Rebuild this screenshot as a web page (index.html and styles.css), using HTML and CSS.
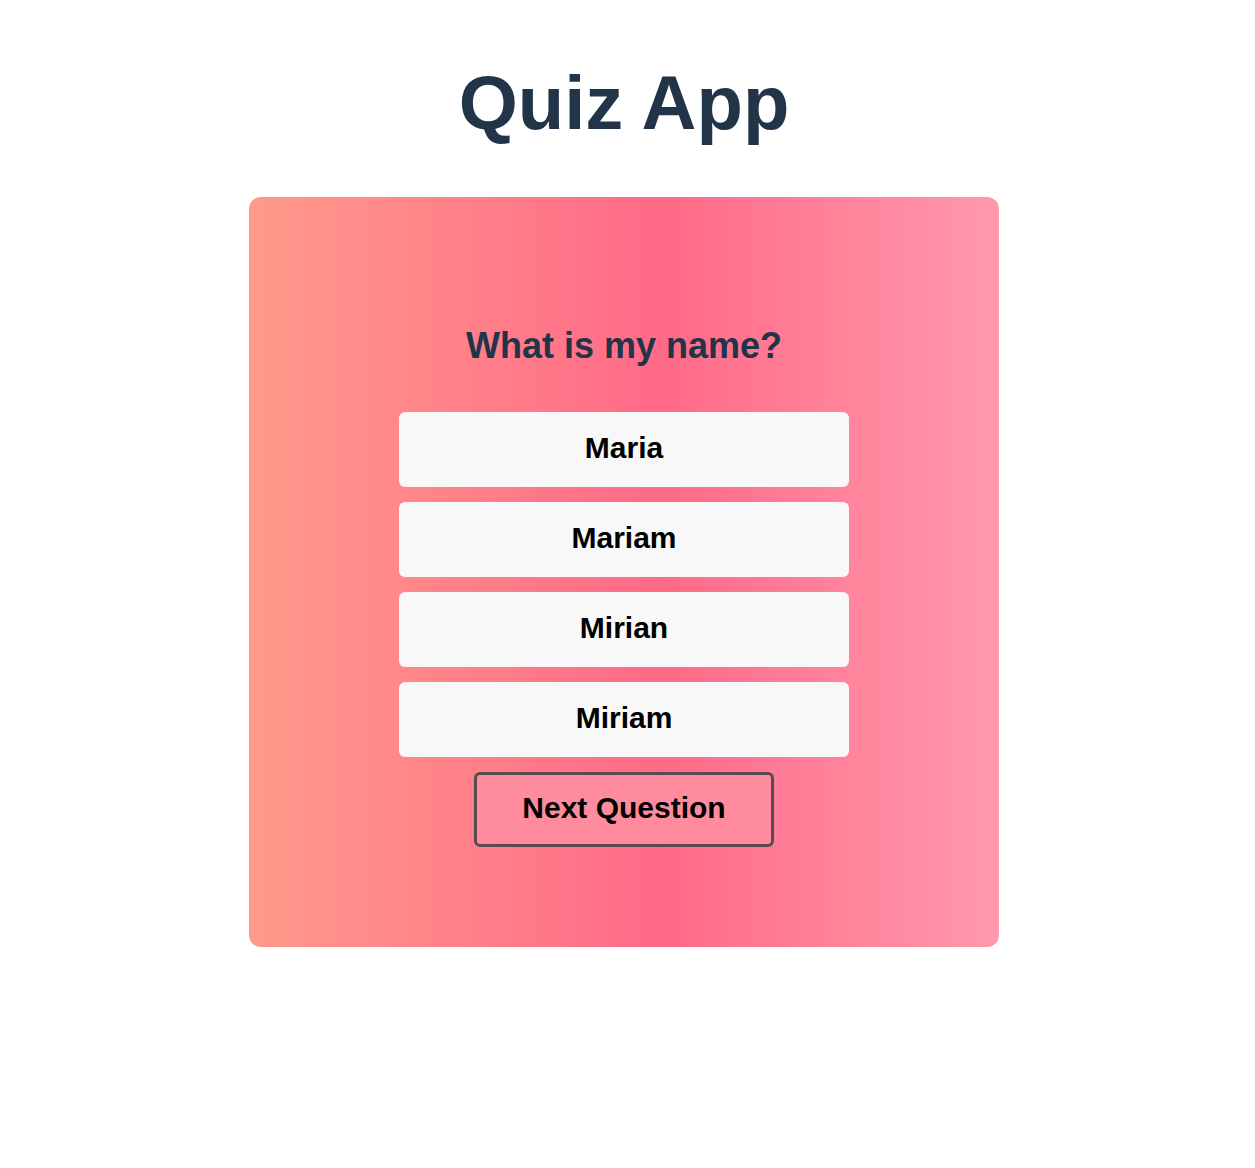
FILE: index.html
```html
<!DOCTYPE html>
<html lang="en">
<head>
<meta charset="utf-8">
<title>Quiz App</title>
<link rel="stylesheet" href="styles.css">
</head>
<body>
  <h1 class="title">Quiz App</h1>
  <div class="card">
    <h2 class="question">What is my name?</h2>
    <div class="answers">
      <button class="answer">Maria</button>
      <button class="answer">Mariam</button>
      <button class="answer">Mirian</button>
      <button class="answer">Miriam</button>
    </div>
    <button class="next">Next Question</button>
  </div>
</body>
</html>
```

FILE: styles.css
```css
html, body {
  margin: 0;
  padding: 0;
  background: #ffffff;
}

body {
  font-family: "Liberation Sans", Arial, sans-serif;
  display: flex;
  flex-direction: column;
  align-items: center;
  padding-right: 7px;
}

.title {
  margin: 59px 0 51px;
  font-size: 76px;
  line-height: 87px;
  font-weight: 700;
  color: #223447;
  text-align: center;
}

.card {
  width: 750px;
  box-sizing: border-box;
  padding: 128px 0 100px;
  border-radius: 12px;
  background: linear-gradient(90deg, #ff9a8b 0%, #ff6a88 55%, #ff99ac 100%);
  display: flex;
  flex-direction: column;
  align-items: center;
}

.question {
  margin: 0 0 46px;
  font-size: 36px;
  line-height: 41px;
  font-weight: 700;
  color: #223447;
  text-align: center;
}

.answers {
  display: flex;
  flex-direction: column;
  gap: 15px;
}

.answer {
  width: 450px;
  height: 75px;
  border: none;
  border-radius: 6px;
  background: #f8f8f8;
  color: #000;
  font-family: "Liberation Sans", Arial, sans-serif;
  font-size: 30px;
  font-weight: 700;
  padding: 0 0 3px;
  cursor: pointer;
}

.next {
  margin-top: 15px;
  width: 300px;
  height: 75px;
  box-sizing: border-box;
  border: 3px solid #5a4b50;
  border-radius: 6px;
  background: #ff8c9e;
  color: #000;
  font-family: "Liberation Sans", Arial, sans-serif;
  font-size: 30px;
  font-weight: 700;
  padding: 0 0 3px;
  cursor: pointer;
}
```
